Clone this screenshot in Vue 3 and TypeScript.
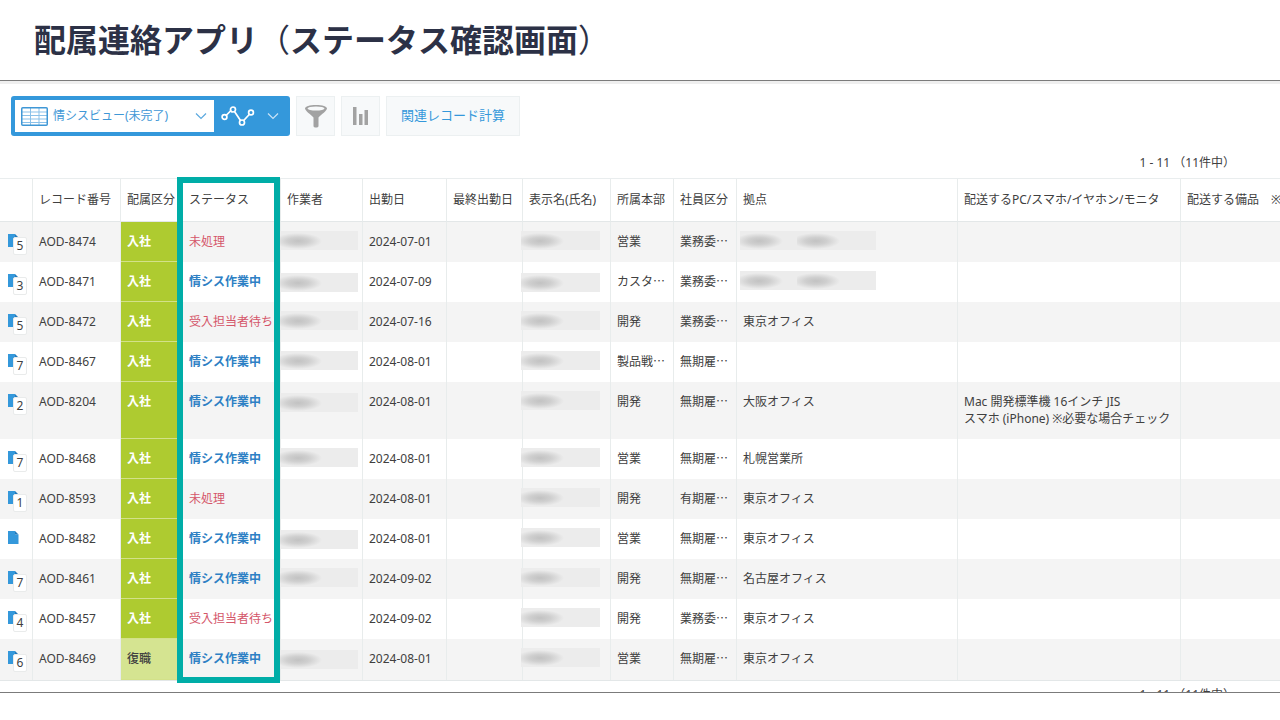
<script setup lang="ts">
interface Row {
  badge: string
  id: string
  kind: string
  status: string
  worker: number
  date: string
  name: number
  dept: string
  type: string
  place: string
  device?: string[]
}

// worker / name: 0 = empty, 1 = masked, 2 = masked with the bar set slightly lower
const rows: Row[] = [
  { badge: '5', id: 'AOD-8474', kind: '入社', status: '未処理', worker: 1, date: '2024-07-01', name: 1, dept: '営業', type: '業務委⋯', place: '' },
  { badge: '3', id: 'AOD-8471', kind: '入社', status: '情シス作業中', worker: 2, date: '2024-07-09', name: 2, dept: 'カスタ⋯', type: '業務委⋯', place: '' },
  { badge: '5', id: 'AOD-8472', kind: '入社', status: '受入担当者待ち', worker: 1, date: '2024-07-16', name: 1, dept: '開発', type: '業務委⋯', place: '東京オフィス' },
  { badge: '7', id: 'AOD-8467', kind: '入社', status: '情シス作業中', worker: 1, date: '2024-08-01', name: 1, dept: '製品戦⋯', type: '無期雇⋯', place: '' },
  { badge: '2', id: 'AOD-8204', kind: '入社', status: '情シス作業中', worker: 2, date: '2024-08-01', name: 1, dept: '開発', type: '無期雇⋯', place: '大阪オフィス', device: ['Mac 開発標準機 16インチ JIS', 'スマホ (iPhone) ※必要な場合チェック'] },
  { badge: '7', id: 'AOD-8468', kind: '入社', status: '情シス作業中', worker: 1, date: '2024-08-01', name: 1, dept: '営業', type: '無期雇⋯', place: '札幌営業所' },
  { badge: '1', id: 'AOD-8593', kind: '入社', status: '未処理', worker: 0, date: '2024-08-01', name: 1, dept: '開発', type: '有期雇⋯', place: '東京オフィス' },
  { badge: '', id: 'AOD-8482', kind: '入社', status: '情シス作業中', worker: 2, date: '2024-08-01', name: 1, dept: '営業', type: '無期雇⋯', place: '東京オフィス' },
  { badge: '7', id: 'AOD-8461', kind: '入社', status: '情シス作業中', worker: 1, date: '2024-09-02', name: 1, dept: '開発', type: '無期雇⋯', place: '名古屋オフィス' },
  { badge: '4', id: 'AOD-8457', kind: '入社', status: '受入担当者待ち', worker: 0, date: '2024-09-02', name: 1, dept: '開発', type: '業務委⋯', place: '東京オフィス' },
  { badge: '6', id: 'AOD-8469', kind: '復職', status: '情シス作業中', worker: 2, date: '2024-08-01', name: 1, dept: '営業', type: '無期雇⋯', place: '東京オフィス' },
]

const columns: string[] = ['', 'レコード番号', '配属区分', 'ステータス', '作業者', '出勤日', '最終出勤日', '表示名(氏名)', '所属本部', '社員区分', '拠点', '配送するPC/スマホ/イヤホン/モニタ', '配送する備品　※']
</script>

<template>
  <div class="page">
    <header class="title-bar">
      <h1><span>配属連絡アプリ</span><span class="paren">（</span><span>ステータス確認画面</span><span class="paren">）</span></h1>
    </header>

    <main class="content">
      <div class="toolbar">
        <div class="view-group">
          <div class="view-box">
            <svg class="grid-icon" width="27" height="19" viewBox="0 0 27 19" fill="none">
              <path d="M1 5h25M1 8.5h25M1 12h25M1 15.5h25M9.5 1v17M18 1v17" stroke="#8bc1e9" />
              <rect x="0.75" y="0.75" width="25.5" height="17.5" rx="1" stroke="#3f97d6" stroke-width="1.5" />
            </svg>
            <select aria-label="ビュー">
              <option>情シスビュー(未完了)</option>
            </select>
            <svg class="view-chevron" width="12" height="8" viewBox="0 0 12 8" fill="none">
              <path d="M1 1.5l5 5 5-5" stroke="#5ba9df" stroke-width="1.2" />
            </svg>
          </div>
          <button class="graph-button" type="button" aria-label="グラフ">
            <svg width="34" height="22" viewBox="0 0 34 22" fill="none" stroke="#fff">
              <path d="M5 10.5l5-5M13.5 6.500l6 9M22.7 15.5l6-6.5" stroke-width="1.7" />
              <circle cx="3.5" cy="12" r="2.4" stroke-width="1.7" />
              <circle cx="12" cy="4.5" r="2.5" stroke-width="1.7" />
              <circle cx="21" cy="17.5" r="2.5" stroke-width="1.7" />
              <circle cx="30" cy="7.5" r="2.4" stroke-width="1.7" />
            </svg>
            <svg width="12" height="8" viewBox="0 0 12 8" fill="none">
              <path d="M1 1.5l5 5 5-5" stroke="#c9e3f6" stroke-width="1.2" />
            </svg>
          </button>
        </div>
        <button class="tool" type="button" aria-label="絞り込み">
          <svg width="24" height="24" viewBox="0 0 24 24">
            <path d="M1 4.5C1 2.600 5.500 1 12 1s11 1.600 11 3.500c0 2-5.500 6-8.500 9V22c0 2-5 2-5 0v-8.500C6.500 10.500 1 6.500 1 4.500z" fill="#a2a2a2" />
            <ellipse cx="12" cy="4.500" rx="8.500" ry="2" fill="#f7f9fa" />
          </svg>
        </button>
        <button class="tool" type="button" aria-label="集計">
          <svg width="16" height="18" viewBox="0 0 16 18" fill="#a2a2a2">
            <rect x="0" y="0" width="3.500" height="18" />
            <rect x="6" y="7" width="3.500" height="11" />
            <rect x="11.500" y="3" width="3.500" height="15" />
          </svg>
        </button>
        <button class="calc" type="button">関連レコード計算</button>
      </div>

      <div class="pager">1 - 11 （11件中）</div>

      <div class="table-area">
        <table>
          <colgroup>
            <col v-for="(_, i) in columns" :key="i" :class="'c' + i" />
          </colgroup>
          <thead>
            <tr>
              <th v-for="(c, i) in columns" :key="i" scope="col">{{ c }}</th>
            </tr>
          </thead>
          <tbody>
            <tr v-for="(r, i) in rows" :key="r.id">
              <td class="icon-cell">
                <a href="#" :aria-label="r.id">
                  <svg width="11" height="13" viewBox="0 0 11 13">
                    <path d="M0 0h7v3.500h3.500V13H0z" fill="#3498db" />
                    <path d="M7 0l3.500 3.500H7z" fill="#2579b8" />
                  </svg>
                  <span v-if="r.badge" class="badge">{{ r.badge }}</span>
                </a>
              </td>
              <td>{{ r.id }}</td>
              <td class="kind" :class="{ back: r.kind === '復職' }">{{ r.kind }}</td>
              <td :class="r.status === '情シス作業中' ? 'working' : 'waiting'">{{ r.status }}</td>
              <td><span v-if="r.worker" class="mask" :class="{ low: r.worker === 2 }"></span></td>
              <td>{{ r.date }}</td>
              <td></td>
              <td><span v-if="r.name" class="mask" :class="{ low: r.name === 2 }"></span></td>
              <td>{{ r.dept }}</td>
              <td>{{ r.type }}</td>
              <td>
                <span v-if="i < 2" class="mask-pair"><span class="mask first"></span><span class="mask"></span></span>
                <template v-else>{{ r.place }}</template>
              </td>
              <td><div v-for="d in r.device" :key="d">{{ d }}</div></td>
              <td></td>
            </tr>
          </tbody>
        </table>
        <div class="highlight"></div>
      </div>

      <div class="pager pager-bottom">1 - 11 （11件中）</div>
    </main>
  </div>
</template>

<style>
body {
  background: #fff;
}
</style>

<style scoped>
.page {
  font-family: "Noto Sans", "Noto Sans CJK JP", sans-serif;
  color: #404040;
  overflow: hidden;
}
.title-bar {
  box-sizing: border-box;
  height: 80px;
  display: flex;
  align-items: center;
  padding: 0 34px 4px;
}
h1 {
  margin: 0;
  font-family: "Noto Sans CJK JP", sans-serif;
  font-size: 32px;
  line-height: 40px;
  font-weight: 700;
  color: #2c3146;
  white-space: nowrap;
}
.paren {
  font-weight: 400;
}
.content {
  border-top: 1px solid #7b7b7b;
  border-bottom: 1px solid #7b7b7b;
  box-shadow: inset 0 3px 0 #efefef;
  padding-top: 15px;
  overflow: hidden;
}
.toolbar {
  display: flex;
  align-items: center;
  gap: 6px;
  padding-left: 11px;
  height: 40px;
}
.view-group {
  display: flex;
  box-sizing: border-box;
  width: 279px;
  height: 40px;
  padding: 4px;
  background: #3498db;
  border-radius: 3px;
}
.view-box {
  display: flex;
  align-items: center;
  flex: none;
  box-sizing: border-box;
  width: 199px;
  padding: 0 7px 0 6px;
  background: #fff;
}
select {
  flex: 1;
  min-width: 0;
  appearance: none;
  border: 0;
  padding: 0 0 0 5px;
  background: none;
  font-family: "Noto Sans", "Noto Sans CJK JP", sans-serif;
  font-size: 12px;
  line-height: 20px;
  color: #3f97d6;
}
.view-chevron {
  flex: none;
}
button {
  font-family: inherit;
  margin: 0;
}
.graph-button {
  flex: 1;
  display: flex;
  align-items: center;
  gap: 12px;
  padding: 0 0 0 7px;
  border: 0;
  background: none;
}
.tool,
.calc {
  display: flex;
  align-items: center;
  justify-content: center;
  box-sizing: border-box;
  height: 40px;
  padding: 0;
  background: #f7f9fa;
  border: 1px solid #ecf0f1;
}
.tool {
  width: 39px;
}
.calc {
  padding: 0 14px 4px;
  font-size: 13px;
  color: #3498db;
}
.pager {
  height: 24px;
  line-height: 24px;
  margin-top: 15px;
  margin-bottom: 3px;
  padding-right: 45px;
  text-align: right;
  font-size: 12px;
}
.pager-bottom {
  height: 5px;
  line-height: 15px;
  margin: 6px 0 0;
  overflow: hidden;
}
.table-area {
  position: relative;
}
table {
  width: 100%;
  table-layout: fixed;
  border-collapse: separate;
  border-spacing: 0;
  border-top: 1px solid #e9edee;
  border-bottom: 1px solid #e3e7e8;
}
.c0 { width: 33px; }
.c1 { width: 88px; }
.c2 { width: 62px; }
.c3 { width: 98px; }
.c4 { width: 82px; }
.c5 { width: 84px; }
.c6 { width: 76px; }
.c7 { width: 88px; }
.c8 { width: 63px; }
.c9 { width: 63px; }
.c10 { width: 221px; }
.c11 { width: 223px; }
th,
td {
  box-sizing: border-box;
  border-right: 1px solid #e8ecec;
  text-align: left;
  white-space: nowrap;
}
th:last-child,
td:last-child {
  border-right: 0;
  overflow: hidden;
}
th {
  height: 43px;
  padding: 0 0 0 6px;
  font-size: 12px;
  line-height: 18px;
  font-weight: 400;
  border-bottom: 1px solid #e3e7e8;
}
td {
  height: 40px;
  padding: 11px 0 12px 6px;
  vertical-align: top;
  font-size: 12px;
  line-height: 17px;
}
tbody tr:nth-child(odd) {
  background: #f4f4f4;
}
tbody tr:last-child td {
  height: 41px;
}
.kind {
  background: #aecb30;
  border-right-color: #dfe9b0;
  border-bottom: 1px solid #d3e189;
  padding-bottom: 11px;
  color: #fff;
  font-weight: 700;
}
.kind.back {
  background: #d5e491;
  color: #404040;
  font-weight: 500;
}
.working {
  color: #2d80c4;
  font-weight: 700;
}
.waiting {
  color: #d4566a;
}
.icon-cell {
  padding: 12px 0 0 8px;
}
.icon-cell a {
  display: block;
  position: relative;
  height: 20px;
  text-decoration: none;
  color: #404040;
}
.icon-cell svg {
  display: block;
}
.badge {
  position: absolute;
  left: 5px;
  top: 3px;
  width: 12px;
  height: 16px;
  border: 1px solid #e9ebeb;
  border-radius: 2px;
  background: #fff;
  font-size: 12px;
  line-height: 16px;
  text-align: center;
}
.mask {
  display: block;
  width: 79px;
  height: 19px;
  margin: -2px 0 0 -8px;
  position: relative;
  background: radial-gradient(ellipse 24px 8px at 19px 10px, #c2c2c2 0%, #cfcfcf 45%, rgba(236, 236, 236, 0) 100%), #ececec;
}
.mask.low {
  top: 2px;
}
.mask-pair {
  display: flex;
  margin: -2px 0 0 -3px;
}
.mask-pair .mask {
  margin: 0;
}
.mask-pair .first {
  width: 57px;
}
.highlight {
  position: absolute;
  left: 177px;
  top: -1px;
  bottom: -2px;
  width: 103px;
  box-sizing: border-box;
  border: 6px solid #00ada7;
  pointer-events: none;
}
</style>
